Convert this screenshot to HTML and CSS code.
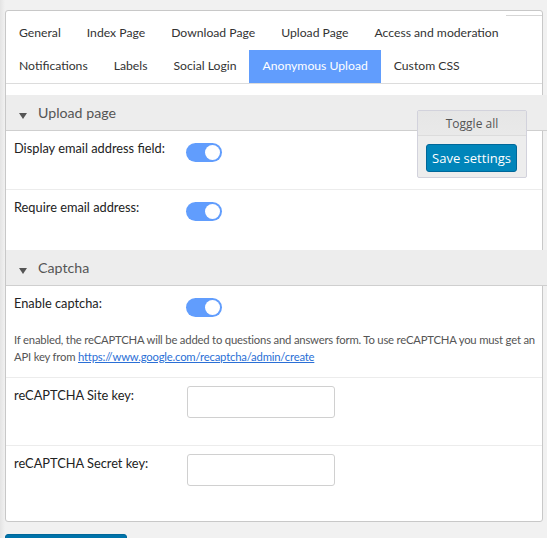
FILE: index.html
```html
<!DOCTYPE html>
<html>
<head>
<meta charset="utf-8">
<link rel="stylesheet" href="styles.css">
</head>
<body>
<div class="page">
  <div class="card">
    <nav class="tabs">
      <div class="tab-row">
        <a class="tab">General</a>
        <a class="tab">Index Page</a>
        <a class="tab">Download Page</a>
        <a class="tab">Upload Page</a>
        <a class="tab">Access and moderation</a>
      </div>
      <div class="tab-row">
        <a class="tab">Notifications</a>
        <a class="tab">Labels</a>
        <a class="tab">Social Login</a>
        <a class="tab active">Anonymous Upload</a>
        <a class="tab">Custom CSS</a>
      </div>
    </nav>

    <section class="section">
      <div class="sec-head"><span class="caret"></span>Upload page</div>
      <div class="row">
        <div class="label">Display email address field:</div>
        <div class="field"><span class="switch"></span></div>
      </div>
      <div class="row last">
        <div class="label">Require email address:</div>
        <div class="field"><span class="switch"></span></div>
      </div>
    </section>

    <section class="section">
      <div class="sec-head"><span class="caret"></span>Captcha</div>
      <div class="row with-help">
        <div class="label">Enable captcha:</div>
        <div class="field"><span class="switch"></span></div>
        <p class="help">If enabled, the reCAPTCHA will be added to questions and answers form. To use reCAPTCHA you must get an API key from <a class="link">https://www.google.com/recaptcha/admin/create</a></p>
      </div>
      <div class="row">
        <div class="label">reCAPTCHA Site key:</div>
        <div class="field"><input class="text-input" type="text"></div>
      </div>
      <div class="row last">
        <div class="label">reCAPTCHA Secret key:</div>
        <div class="field"><input class="text-input" type="text"></div>
      </div>
    </section>

    <div class="float-box">
      <div class="toggle-all">Toggle all</div>
      <button class="btn-save">Save settings</button>
    </div>
  </div>
  <button class="btn-bottom">Save settings</button>
</div>
</body>
</html>
```

FILE: styles.css
```css
* { box-sizing: border-box; }

body {
  margin: 0;
  background: linear-gradient(to right, #e4e4e4 0, #f1f1f1 5px) #f1f1f1;
  font-family: Lato, "Liberation Sans", sans-serif;
  color: #23282d;
}

.page {
  padding: 10px 4px 0 5px;
}

.card {
  position: relative;
  background: #fff;
  border: 1px solid #c8c8c8;
  border-radius: 3px;
  padding-bottom: 6px;
}

.card::after {
  content: "";
  position: absolute;
  right: 0;
  top: 4px;
  width: 36px;
  border-top: 1px solid #d6d6d6;
}

.tabs {
  padding-top: 6px;
  border-bottom: 1px solid #dcdcdc;
  margin-bottom: 11px;
}

.tab-row {
  display: flex;
}

.tab {
  display: block;
  padding: 0 13px 2px;
  height: 33px;
  line-height: 31px;
  font-size: 12.2px;
  color: #333;
  white-space: nowrap;
}

.tab.active {
  background: #619dfd;
  color: #fff;
}

.sec-head {
  margin-right: -5px;
  height: 36px;
  line-height: 35px;
  background: #ededed;
  border-bottom: 1px solid #cfcfcf;
  font-size: 14.2px;
  color: #555;
  display: flex;
  align-items: center;
}

.caret {
  width: 0;
  height: 0;
  border-left: 4px solid transparent;
  border-right: 4px solid transparent;
  border-top: 6px solid #555;
  margin: 6px 11px 0 13px;
}

.row {
  display: grid;
  grid-template-columns: 172px auto;
  align-items: start;
  padding: 8px 8px 27px;
  border-bottom: 1px solid #ececec;
}

.row.last {
  border-bottom: 0;
  padding-bottom: 29px;
}

.row.with-help { padding-bottom: 12px; }

.label {
  font-size: 12.8px;
  line-height: 18px;
  color: #222;
}

.field {
  display: flex;
}

.switch {
  position: relative;
  display: block;
  width: 36px;
  height: 19px;
  margin-top: 4px;
  border-radius: 10px;
  background: #619dfd;
}

.switch::after {
  content: "";
  position: absolute;
  right: 2px;
  top: 2px;
  width: 15px;
  height: 15px;
  border-radius: 50%;
  background: #fff;
}

.help {
  grid-column: 1 / -1;
  margin: 14px -6px 0 0;
  font-size: 11.3px;
  letter-spacing: -0.2px;
  line-height: 17px;
  color: #555;
}

.link {
  color: #2a6fd6;
  text-decoration: underline;
}

.text-input {
  display: block;
  margin: 0 0 0 1px;
  width: 148px;
  height: 32px;
  border: 1px solid #d0d0d0;
  border-radius: 3px;
  background: #fff;
}

.float-box {
  position: absolute;
  top: 99px;
  right: 15px;
  width: 110px;
  height: 68px;
  background: #ededed;
  border: 1px solid #d2d2dc;
  border-radius: 2px;
  padding: 0 6px;
}

.toggle-all {
  height: 25px;
  line-height: 26px;
  text-align: center;
  font-family: "Open Sans", sans-serif;
  font-size: 12px;
  color: #555;
  border-bottom: 1px solid #dcdcdc;
  margin: 0 -6px;
  padding: 0 6px;
  background: linear-gradient(#e6e6e6, #e9e9e9);
}

.btn-save {
  display: block;
  margin: 8px 0 0 2px;
  width: 91px;
  height: 28px;
  padding: 0;
  background: #0085ba;
  border: 1px solid #006799;
  border-radius: 3px;
  color: #fff;
  font-family: "Open Sans", sans-serif;
  font-size: 13px;
}

.btn-bottom {
  display: block;
  margin-top: 12px;
  width: 122px;
  height: 30px;
  background: #0073aa;
  border: 1px solid #006799;
  border-radius: 3px;
  color: #fff;
  font-family: "Open Sans", sans-serif;
  font-size: 13px;
}
```
